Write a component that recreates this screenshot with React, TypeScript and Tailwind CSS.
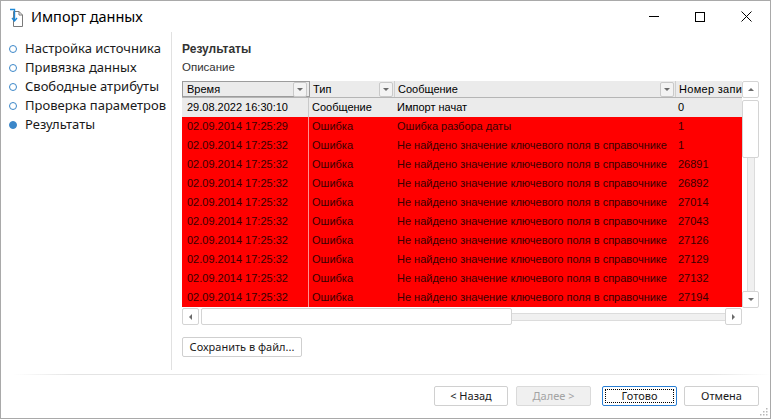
import React from "react";

const UI = { fontFamily: '"Noto Sans", "Open Sans", sans-serif' };
const TBL = { fontFamily: '"Liberation Sans", Arial, sans-serif' };

const navItems = [
  "Настройка источника",
  "Привязка данных",
  "Свободные атрибуты",
  "Проверка параметров",
  "Результаты",
];

const rows: [string, string, string, string][] = [
  ["02.09.2014 17:25:29", "Ошибка", "Ошибка разбора даты", "1"],
  ["02.09.2014 17:25:32", "Ошибка", "Не найдено значение ключевого поля в справочнике", "1"],
  ["02.09.2014 17:25:32", "Ошибка", "Не найдено значение ключевого поля в справочнике", "26891"],
  ["02.09.2014 17:25:32", "Ошибка", "Не найдено значение ключевого поля в справочнике", "26892"],
  ["02.09.2014 17:25:32", "Ошибка", "Не найдено значение ключевого поля в справочнике", "27014"],
  ["02.09.2014 17:25:32", "Ошибка", "Не найдено значение ключевого поля в справочнике", "27043"],
  ["02.09.2014 17:25:32", "Ошибка", "Не найдено значение ключевого поля в справочнике", "27126"],
  ["02.09.2014 17:25:32", "Ошибка", "Не найдено значение ключевого поля в справочнике", "27129"],
  ["02.09.2014 17:25:32", "Ошибка", "Не найдено значение ключевого поля в справочнике", "27132"],
  ["02.09.2014 17:25:32", "Ошибка", "Не найдено значение ключевого поля в справочнике", "27194"],
];

function Tri({ dir }: { dir: "up" | "down" | "left" | "right" }) {
  const pts =
    dir === "down"
      ? "0,0 6,0 3,3"
      : dir === "up"
      ? "0,3 6,3 3,0"
      : dir === "left"
      ? "3,0 3,6 0,3"
      : "0,0 0,6 3,3";
  const w = dir === "up" || dir === "down" ? 6 : 3;
  const h = dir === "up" || dir === "down" ? 3 : 6;
  return (
    <svg width={w} height={h} viewBox={`0 0 ${w} ${h}`}>
      <polygon points={pts} fill="#6b6b6b" />
    </svg>
  );
}

function HeaderDrop() {
  return (
    <div className="w-[14px] h-[15px] rounded-[2px] border border-[#c9c9c9] bg-[#f3f3f3] flex items-center justify-center shrink-0">
      <Tri dir="down" />
    </div>
  );
}

function ScrollBtn({ dir }: { dir: "up" | "down" | "left" | "right" }) {
  return (
    <div className="w-[17px] h-[17px] rounded-[2px] border border-[#d4d4d4] bg-white flex items-center justify-center shrink-0">
      <Tri dir={dir} />
    </div>
  );
}

function WinButton({ children, className = "" }: { children: React.ReactNode; className?: string }) {
  return (
    <div
      className={
        "h-[20px] rounded-[2px] border flex items-center justify-center text-[11px] " + className
      }
    >
      {children}
    </div>
  );
}

export default function App() {
  return (
    <div
      className="w-[771px] h-[419px] bg-white border border-[#a9a9a9] flex flex-col text-[#1a1a1a] overflow-hidden relative"
      style={UI}
    >
      {/* Title bar */}
      <div className="h-[31px] flex items-center shrink-0">
        <svg width="14" height="20" viewBox="0 0 14 20" className="ml-[8px] mt-[2px]">
          <path d="M4.5 3.5 H10 L13.5 7 V18.5 H4.5 Z" fill="white" stroke="#7a7a7a" />
          <path d="M10 3.5 V7 H13.5" fill="none" stroke="#7a7a7a" />
          <path d="M1 1.5 H5.5 V12" fill="none" stroke="#1e88d6" strokeWidth="1.4" />
          <path d="M3 10 L5.5 13 L8 10" fill="none" stroke="#1e88d6" strokeWidth="1.4" />
        </svg>
        <span className="ml-[8px] text-[14.5px] text-black">Импорт данных</span>
        <div className="flex-1" />
        <div className="w-[46px] h-[31px] flex items-center justify-center">
          <div className="w-[10px] h-[1px] bg-black" />
        </div>
        <div className="w-[46px] h-[31px] flex items-center justify-center">
          <div className="w-[10px] h-[10px] border border-black" />
        </div>
        <div className="w-[46px] h-[31px] flex items-center justify-center mr-[1px]">
          <svg width="11" height="11" viewBox="0 0 11 11">
            <path d="M0.5 0.5 L10.5 10.5 M10.5 0.5 L0.5 10.5" stroke="black" strokeWidth="1" />
          </svg>
        </div>
      </div>

      {/* Body */}
      <div className="h-[338px] flex shrink-0">
        <div className="w-[171px] border-r border-[#e1e1e1] pt-[7px] shrink-0">
          {navItems.map((t, i) => (
            <div key={t} className="h-[19px] flex items-center text-[13px]">
              <div
                className={
                  "ml-[8px] w-[8px] h-[8px] rounded-full border-[1.5px] border-[#3b87c9] " +
                  (i === 4 ? "bg-[#3b87c9]" : "bg-white")
                }
              />
              <span className="ml-[8px]">{t}</span>
            </div>
          ))}
        </div>

        <div className="flex-1 pl-[10px] pr-[11px] pt-[7px] flex flex-col">
          <div className="h-[19px] flex items-center text-[12px] font-bold text-[#333]" style={TBL}>
            Результаты
          </div>
          <div className="h-[19px] flex items-center text-[11.5px] text-[#333]" style={TBL}>
            Описание
          </div>

          {/* Table */}
          <div className="mt-[4px] flex flex-col" style={TBL}>
            <div className="flex">
              <div className="w-[560px] h-[227px] overflow-hidden">
                {/* header */}
                <div className="flex h-[17px] bg-[#ebebeb] border-b border-[#b5b5b5] text-[11px] text-black whitespace-nowrap">
                  <div className="w-[128px] shrink-0 border border-[#9c9c9c] flex items-center pl-[4px] pr-[2px]">
                    <span className="flex-1">Время</span>
                    <HeaderDrop />
                  </div>
                  <div className="w-[85px] shrink-0 flex items-center pl-[3px] pr-[1px] border-r border-[#d0d0d0]">
                    <span className="flex-1">Тип</span>
                    <HeaderDrop />
                  </div>
                  <div className="w-[281px] shrink-0 flex items-center pl-[3px] pr-[1px] border-r border-[#d0d0d0]">
                    <span className="flex-1">Сообщение</span>
                    <HeaderDrop />
                  </div>
                  <div className="w-[120px] shrink-0 flex items-center pl-[3px] tracking-[0.3px]">
                    <span>Номер записи</span>
                  </div>
                </div>
                {/* first row */}
                <div className="flex h-[19px] bg-[#ebebeb] text-[11px] text-black whitespace-nowrap items-center">
                  <div className="w-[127px] shrink-0 pl-[5px] h-full flex items-center border-r border-[#c9c9c9]">29.08.2022 16:30:10</div>
                  <div className="w-[85px] shrink-0 pl-[3px]">Сообщение</div>
                  <div className="w-[281px] shrink-0 pl-[3px]">Импорт начат</div>
                  <div className="w-[120px] shrink-0 pl-[3px]">0</div>
                </div>
                {rows.map((r, i) => (
                  <div
                    key={i}
                    className="flex h-[19px] bg-[#ff0000] text-[11px] text-[#3a0000] whitespace-nowrap items-center"
                  >
                    <div className="w-[127px] shrink-0 pl-[5px] h-full flex items-center border-r border-[#ff9090]">{r[0]}</div>
                    <div className="w-[85px] shrink-0 pl-[3px]">{r[1]}</div>
                    <div className="w-[281px] shrink-0 pl-[3px] overflow-hidden">{r[2]}</div>
                    <div className="w-[120px] shrink-0 pl-[3px]">{r[3]}</div>
                  </div>
                ))}
              </div>
              {/* vertical scrollbar */}
              <div className="w-[17px] h-[227px] flex flex-col items-center">
                <ScrollBtn dir="up" />
                <div className="mt-[2px] w-[17px] h-[58px] rounded-[2px] border border-[#d4d4d4] bg-white" />
                <div className="flex-1 w-[8px] bg-[#f0f0f0] border-x border-[#dcdcdc]" />
                <ScrollBtn dir="down" />
              </div>
            </div>
            {/* horizontal scrollbar */}
            <div className="flex h-[17px]">
              <div className="w-[560px] flex items-center">
                <ScrollBtn dir="left" />
                <div className="ml-[2px] w-[311px] h-[17px] rounded-[2px] border border-[#d4d4d4] bg-white" />
                <div className="flex-1 h-[8px] bg-[#f0f0f0] border-y border-[#dcdcdc]" />
                <ScrollBtn dir="right" />
              </div>
              <div className="w-[17px]" />
            </div>
          </div>

          <div className="mt-[12px]">
            <WinButton className="w-[120px] border-[#cfcfcf] bg-white text-[#1a1a1a]">Сохранить в файл...</WinButton>
          </div>
        </div>
      </div>

      {/* Footer */}
      <div className="flex-1 flex flex-col">
        <div className="mt-[4px] ml-[12px] h-[1px] bg-[linear-gradient(to_right,transparent,#e4e4e4_8%,#e4e4e4_92%,transparent)]" />
        <div className="mt-[11px] flex justify-end pr-[11px]">
          <WinButton className="w-[74px] border-[#d0d0d0] bg-white">&lt; Назад</WinButton>
          <WinButton className="ml-[8px] w-[75px] border-[#dadada] bg-[#f0f0f0] text-[#a3a3a3]">Далее &gt;</WinButton>
          <WinButton className="ml-[11px] w-[75px] border-[#2a7fd4] bg-white">
            <div className="w-[69px] h-[14px] border border-dotted border-black flex items-center justify-center">
              Готово
            </div>
          </WinButton>
          <WinButton className="ml-[7px] w-[75px] border-[#d0d0d0] bg-white">Отмена</WinButton>
        </div>
      </div>

      {/* resize grip */}
      <svg width="10" height="10" viewBox="0 0 10 10" className="absolute right-[2px] bottom-[2px]">
        {[
          [8, 0], [8, 3], [5, 3], [8, 6], [5, 6], [2, 6],
        ].map(([x, y], i) => (
          <rect key={i} x={x} y={y + 2} width="1.5" height="1.5" fill="#b8b8b8" />
        ))}
      </svg>
    </div>
  );
}
